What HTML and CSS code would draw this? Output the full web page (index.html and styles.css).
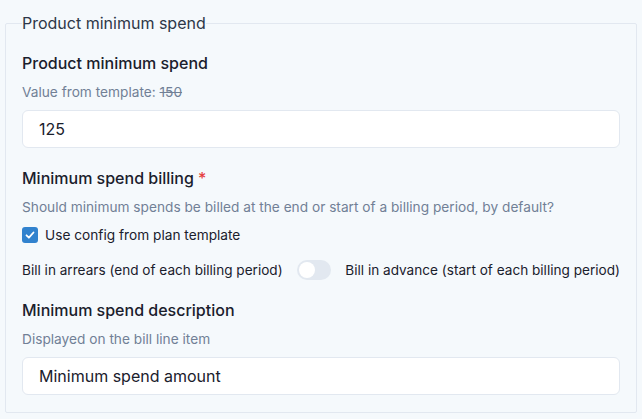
FILE: index.html
```html
<!DOCTYPE html>
<html lang="en">
<head>
  <meta charset="UTF-8">
  <meta name="viewport" content="width=device-width, initial-scale=1.0">
  <title>Product minimum spend</title>
  <link rel="stylesheet" href="styles.css">
</head>
<body>
  <fieldset class="group">
    <legend>Product minimum spend</legend>

    <div class="field">
      <label class="field-label" for="min-spend">Product minimum spend</label>
      <p class="hint">Value from template: <s>150</s></p>
      <input id="min-spend" class="text-input" type="text" value="125">
    </div>

    <div class="field">
      <div class="field-label">Minimum spend billing <span class="required">*</span></div>
      <p class="hint">Should minimum spends be billed at the end or start of a billing period, by default?</p>
      <label class="check">
        <span class="box">
          <svg width="12" height="12" viewBox="0 0 12 12"><path d="M2.5 6.3l2.4 2.4 4.6-5.2" fill="none" stroke="#fff" stroke-width="1.8" stroke-linecap="round" stroke-linejoin="round"/></svg>
        </span>
        Use config from plan template
      </label>
      <div class="switch-row">
        <span>Bill in arrears (end of each billing period)</span>
        <span class="switch"><span class="knob"></span></span>
        <span>Bill in advance (start of each billing period)</span>
      </div>
    </div>

    <div class="field">
      <label class="field-label" for="min-desc">Minimum spend description</label>
      <p class="hint">Displayed on the bill line item</p>
      <input id="min-desc" class="text-input" type="text" value="Minimum spend amount">
    </div>
  </fieldset>
</body>
</html>
```

FILE: styles.css
```css
* {
  box-sizing: border-box;
}
body {
  margin: 0;
  padding: 11px 5px 0;
  font-family: Inter, "Noto Sans", sans-serif;
  background: #f5f9fc;
  color: #1a202c;
}
.group {
  margin: 0;
  padding: 16px 16px 17px;
  border: 1px solid #e2e8f0;
  border-radius: 2px;
}
.group legend {
  padding: 0;
  font-size: 16px;
  line-height: 24px;
  color: #2d3748;
}
.field {
  margin-bottom: 18px;
}
.field:last-child {
  margin-bottom: 0;
}
.field-label {
  display: block;
  font-size: 16px;
  line-height: 24px;
  font-weight: 500;
  color: #1a202c;
  margin-bottom: 7px;
}
.required {
  color: #e53e3e;
}
.hint {
  margin: 0 0 8px;
  font-size: 13.7px;
  line-height: 20px;
  color: #718096;
}
.hint s {
  text-decoration-thickness: 1px;
}
.text-input {
  display: block;
  width: 100%;
  height: 38px;
  padding: 0 16px;
  font-family: inherit;
  font-size: 16px;
  color: #1a202c;
  background: #fff;
  border: 1px solid #e2e8f0;
  border-radius: 6px;
}
.check {
  display: flex;
  align-items: center;
  gap: 7px;
  font-size: 13.7px;
  line-height: 20px;
  margin-bottom: 15px;
}
.box {
  width: 16px;
  height: 16px;
  border-radius: 3px;
  background: #3182ce;
  display: flex;
  align-items: center;
  justify-content: center;
}
.switch-row {
  display: flex;
  align-items: center;
  justify-content: space-between;
  gap: 14px;
  font-size: 13.6px;
  line-height: 20px;
  white-space: nowrap;
}
.switch {
  flex-shrink: 0;
  width: 34px;
  height: 20px;
  border-radius: 10px;
  background: #e2e8f0;
  padding: 2px;
  display: flex;
}
.knob {
  width: 16px;
  height: 16px;
  border-radius: 50%;
  background: #fff;
}
```
